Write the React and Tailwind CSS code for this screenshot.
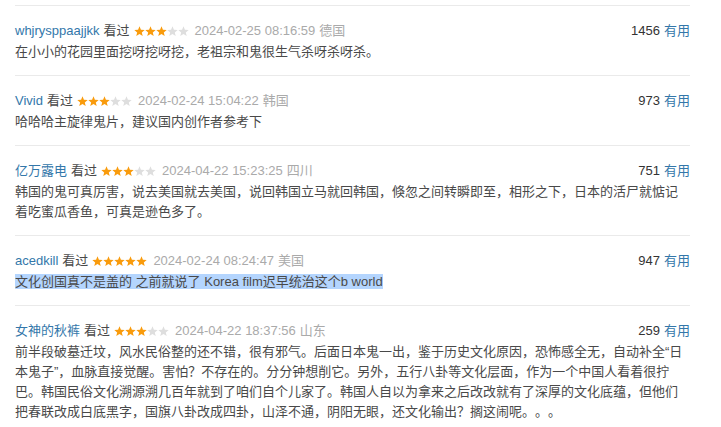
const comments = [
  {
    name: 'whjrysppaajjkk',
    stars: 3,
    time: '2024-02-25 08:16:59',
    loc: '德国',
    votes: 1456,
    text: '在小小的花园里面挖呀挖呀挖，老祖宗和鬼很生气杀呀杀呀杀。',
  },
  {
    name: 'Vivid',
    stars: 3,
    time: '2024-02-24 15:04:22',
    loc: '韩国',
    votes: 973,
    text: '哈哈哈主旋律鬼片，建议国内创作者参考下',
  },
  {
    name: '亿万露电',
    stars: 3,
    time: '2024-04-22 15:23:25',
    loc: '四川',
    votes: 751,
    text: '韩国的鬼可真厉害，说去美国就去美国，说回韩国立马就回韩国，倏忽之间转瞬即至，相形之下，日本的活尸就惦记着吃蜜瓜香鱼，可真是逊色多了。',
  },
  {
    name: 'acedkill',
    stars: 5,
    time: '2024-02-24 08:24:47',
    loc: '美国',
    votes: 947,
    text: '文化创国真不是盖的 之前就说了 Korea film迟早统治这个b world',
    selected: true,
  },
  {
    name: '女神的秋裤',
    stars: 3,
    time: '2024-04-22 18:37:56',
    loc: '山东',
    votes: 259,
    text: '前半段破墓迁坟，风水民俗整的还不错，很有邪气。后面日本鬼一出，鉴于历史文化原因，恐怖感全无，自动补全“日本鬼子”，血脉直接觉醒。害怕？不存在的。分分钟想削它。另外，五行八卦等文化层面，作为一个中国人看着很拧巴。韩国民俗文化溯源溯几百年就到了咱们自个儿家了。韩国人自以为拿来之后改改就有了深厚的文化底蕴，但他们把春联改成白底黑字，国旗八卦改成四卦，山泽不通，阴阳无眼，还文化输出？搁这闹呢。。。',
  },
];

function Star({ on }) {
  return (
    <svg width="11" height="11" viewBox="0 0 24 23" className="shrink-0">
      <path
        d="M12 0l3.1 7.6 8.2.6-6.3 5.3 2 8L12 17.2 4.9 21.5l2-8L.7 8.2l8.2-.6z"
        fill={on ? '#f99b0c' : '#dedede'}
      />
    </svg>
  );
}

function Comment({ c }) {
  return (
    <div className="border-t border-[#eaeaea] pt-[15px] pb-[13px]">
      <div className="flex items-center justify-between h-5 leading-5">
        <div className="flex items-center">
          <span className="text-[#3377aa]">{c.name}</span>
          <span className="ml-1 text-[#494949]">看过</span>
          <span className="ml-1 flex">
            {[0, 1, 2, 3, 4].map((i) => (
              <Star key={i} on={i < c.stars} />
            ))}
          </span>
          <span className="ml-[6px] text-[#aaaaaa]">{c.time}</span>
          <span className="ml-1 text-[#aaaaaa]">{c.loc}</span>
        </div>
        <div>
          <span className="text-[#333333]">{c.votes}</span>
          <span className="ml-1 text-[#3377aa]">有用</span>
        </div>
      </div>
      <p className="mt-px leading-5 text-[#494949] [text-spacing-trim:space-all]">
        {c.selected ? <span className="bg-[#b4d5fe]">{c.text}</span> : c.text}
      </p>
    </div>
  );
}

export default function App() {
  return (
    <div
      className="w-[721px] h-[427px] overflow-hidden bg-white pt-[5px] pl-[15px] text-[13px]"
      style={{ fontFamily: '"Liberation Sans", "Noto Sans CJK SC", sans-serif' }}
    >
      <div className="w-[675px]">
        {comments.map((c) => (
          <Comment key={c.name} c={c} />
        ))}
      </div>
    </div>
  );
}
